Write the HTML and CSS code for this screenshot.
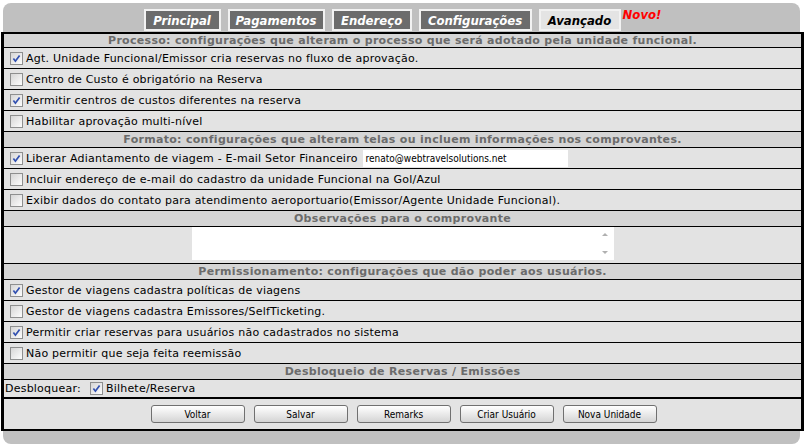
FILE: index.html
```html
<!DOCTYPE html>
<html lang="pt-BR">
<head>
<meta charset="utf-8">
<title>Avançado</title>
<link rel="stylesheet" href="styles.css">
</head>
<body>
<svg class="defs" width="0" height="0" aria-hidden="true">
  <defs>
    <linearGradient id="cbg" x1="0" y1="0" x2="1" y2="1">
      <stop offset="0" stop-color="#d4d4d4"/>
      <stop offset="1" stop-color="#ffffff"/>
    </linearGradient>
    <symbol id="cb-off" viewBox="0 0 13 13">
      <rect x="0.5" y="0.5" width="12" height="12" fill="url(#cbg)" stroke="#8e8f8f"/>
    </symbol>
    <symbol id="cb-on" viewBox="0 0 13 13">
      <rect x="0.5" y="0.5" width="12" height="12" fill="url(#cbg)" stroke="#8e8f8f"/>
      <path d="M3.4 6.6 L5.4 9.2 L9.6 3.4" fill="none" stroke="#3150b0" stroke-width="1.7"/>
    </symbol>
  </defs>
</svg>
<div class="frame">
  <div class="tabs">
    <span class="tab t1">Principal</span>
    <span class="tab t2">Pagamentos</span>
    <span class="tab t3">Endereço</span>
    <span class="tab t4">Configurações</span>
    <span class="tab t5 active">Avançado</span>
    <span class="novo">Novo!</span>
  </div>
  <div class="panel">
    <div class="hdr first">Processo: configurações que alteram o processo que será adotado pela unidade funcional.</div>
    <div class="row"><svg class="cb"><use href="#cb-on"/></svg><span>Agt. Unidade Funcional/Emissor cria reservas no fluxo de aprovação.</span></div>
    <div class="row"><svg class="cb"><use href="#cb-off"/></svg><span>Centro de Custo é obrigatório na Reserva</span></div>
    <div class="row"><svg class="cb"><use href="#cb-on"/></svg><span>Permitir centros de custos diferentes na reserva</span></div>
    <div class="row"><svg class="cb"><use href="#cb-off"/></svg><span>Habilitar aprovação multi-nível</span></div>
    <div class="hdr">Formato: configurações que alteram telas ou incluem informações nos comprovantes.</div>
    <div class="row"><svg class="cb"><use href="#cb-on"/></svg><span>Liberar Adiantamento de viagem - E-mail Setor Financeiro</span><span class="email">renato@webtravelsolutions.net</span></div>
    <div class="row"><svg class="cb"><use href="#cb-off"/></svg><span>Incluir endereço de e-mail do cadastro da unidade Funcional na Gol/Azul</span></div>
    <div class="row"><svg class="cb"><use href="#cb-off"/></svg><span>Exibir dados do contato para atendimento aeroportuario(Emissor/Agente Unidade Funcional).</span></div>
    <div class="hdr">Observações para o comprovante</div>
    <div class="row obs">
      <div class="textarea"><span class="arr up"></span><span class="arr down"></span></div>
    </div>
    <div class="hdr">Permissionamento: configurações que dão poder aos usuários.</div>
    <div class="row"><svg class="cb"><use href="#cb-on"/></svg><span>Gestor de viagens cadastra políticas de viagens</span></div>
    <div class="row"><svg class="cb"><use href="#cb-off"/></svg><span>Gestor de viagens cadastra Emissores/SelfTicketing.</span></div>
    <div class="row"><svg class="cb"><use href="#cb-on"/></svg><span>Permitir criar reservas para usuários não cadastrados no sistema</span></div>
    <div class="row"><svg class="cb"><use href="#cb-off"/></svg><span>Não permitir que seja feita reemissão</span></div>
    <div class="hdr">Desbloqueio de Reservas / Emissões</div>
    <div class="row unlock"><span class="lbl">Desbloquear:</span><svg class="cb"><use href="#cb-on"/></svg><span>Bilhete/Reserva</span></div>
    <div class="buttons">
      <span class="btn">Voltar</span>
      <span class="btn">Salvar</span>
      <span class="btn">Remarks</span>
      <span class="btn">Criar Usuário</span>
      <span class="btn">Nova Unidade</span>
    </div>
  </div>
</div>
</body>
</html>
```
FILE: styles.css
```css
html, body {
  margin: 0;
  padding: 0;
  background: #ffffff;
}

body {
  font-family: "DejaVu Sans", Verdana, sans-serif;
  font-size: 11px;
  color: #000;
}

.defs {
  position: absolute;
  width: 0;
  height: 0;
}

.frame {
  margin: 3px 0 0 3px;
  width: 797px;
  height: 441px;
  background: #c0c0c0;
  border-radius: 8px;
  box-sizing: border-box;
  padding-top: 6px;
}

.tabs {
  display: flex;
  justify-content: center;
  gap: 7px;
  height: 23px;
  padding-left: 2px;
}

.tab {
  box-sizing: border-box;
  height: 22px;
  border: 2px solid #f2f2f2;
  background: #6c6c6c;
  color: #ffffff;
  font-family: "DejaVu Sans Condensed", "DejaVu Sans", sans-serif;
  font-weight: bold;
  font-style: italic;
  font-size: 13px;
  display: flex;
  align-items: center;
  justify-content: center;
}

.t1 { width: 77px; }
.t2 { width: 97px; }
.t3 { width: 80px; }
.t4 { width: 113px; }
.t5 { width: 82px; }

.tab.active {
  background: #e4e4e4;
  color: #000;
}

.novo {
  color: #ff0000;
  font-family: "DejaVu Sans Condensed", "DejaVu Sans", sans-serif;
  font-weight: bold;
  font-style: italic;
  font-size: 13px;
  line-height: 13px;
  margin-left: -5px;
  margin-top: -1px;
  align-self: flex-start;
}

.panel {
  margin: 0 -4px 0 -2px;
  border: solid #000;
  border-width: 2px 3px 2px 3px;
  background: #e3e3e3;
}

.hdr {
  height: 15px;
  line-height: 15px;
  background: #d5d5d5;
  color: #6b6b6b;
  font-weight: bold;
  letter-spacing: 0.3px;
  text-align: center;
  border-bottom: 1px solid #000;
}

.hdr.first {
  height: 13px;
  line-height: 14px;
}

.row {
  height: 20px;
  display: flex;
  align-items: center;
  border-bottom: 1px solid #000;
  padding-left: 6px;
  white-space: nowrap;
  letter-spacing: 0.22px;
}

.cb {
  width: 13px;
  height: 13px;
  flex: none;
  margin-right: 3px;
}

.email {
  margin-left: 5px;
  width: 205px;
  height: 17px;
  background: #fff;
  font-family: "DejaVu Sans Condensed", "DejaVu Sans", sans-serif;
  font-size: 10px;
  letter-spacing: 0;
  line-height: 17px;
  padding-left: 3px;
  box-sizing: border-box;
}

.row.obs {
  height: 36px;
  justify-content: center;
  padding-left: 0;
  align-items: flex-start;
}

.textarea {
  position: relative;
  width: 422px;
  height: 33px;
  background: #fff;
}

.arr {
  position: absolute;
  right: 6px;
  width: 0;
  height: 0;
  border-left: 3px solid transparent;
  border-right: 3px solid transparent;
}

.arr.up {
  top: 6px;
  border-bottom: 3px solid #b0b0b0;
}

.arr.down {
  bottom: 6px;
  border-top: 3px solid #b0b0b0;
}

.row.unlock {
  height: 17px;
  padding-left: 1px;
  border-bottom: 2px solid #000;
}

.unlock .lbl {
  margin-right: 9px;
}

.buttons {
  height: 30px;
  display: flex;
  justify-content: center;
  align-items: center;
  gap: 9px;
  padding-left: 2px;
}

.btn {
  box-sizing: border-box;
  width: 94px;
  height: 18px;
  border: 1px solid #707070;
  border-radius: 3px;
  background: linear-gradient(#ffffff, #e8e8e8 55%, #d4d4d4);
  font-family: "DejaVu Sans Condensed", "DejaVu Sans", sans-serif;
  font-size: 10px;
  display: flex;
  align-items: center;
  justify-content: center;
  color: #000;
}
```
